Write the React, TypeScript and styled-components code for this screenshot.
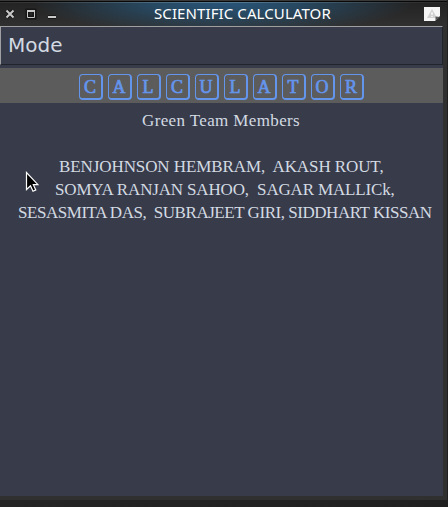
import React from "react";
import styled, { createGlobalStyle } from "styled-components";

const GlobalStyle = createGlobalStyle`
  * { box-sizing: border-box; }
  body { margin: 0; background: #1e1e1f; overflow: hidden; }
`;

const Desktop = styled.div`
  width: 448px;
  height: 507px;
  overflow: hidden;
  background: linear-gradient(90deg, #252525 0, #202020 100%);
  cursor: default;
`;

const Window = styled.div`
  position: relative;
  width: 447px;
  height: 500px;
  display: flex;
  flex-direction: column;
  background: #303030;
  border-top: 1px solid #393939;
  padding-right: 4px;
  padding-bottom: 4px;
`;

const TitleBar = styled.header`
  display: grid;
  grid-template-columns: 60px 1fr 28px;
  align-items: center;
  flex: none;
  height: 25px;
  margin-right: -4px;
  border-top: 1px solid #080808;
  background:
    linear-gradient(90deg, #ffffff10, #a0b8c060 50%, #ffffff08) top / 100% 1px no-repeat,
    radial-gradient(ellipse 190px 32px at 50% 0, #28557a 0, #28506ed0 40%, #28506e00 100%),
    linear-gradient(#232323, #303030);
`;

const Controls = styled.svg`
  display: block;
  width: 60px;
  height: 24px;
`;

const Title = styled.div`
  width: 180px;
  margin: 0 0 2px 94px;
  font: 15px/22px "Noto Sans", sans-serif;
  letter-spacing: 0.1px;
  color: #fff;
  white-space: nowrap;
`;

const StatusIcon = styled.svg`
  display: block;
  width: 16px;
  height: 14px;
  margin-left: 5px;
`;

const MenuBar = styled.nav`
  flex: none;
  height: 39px;
  padding-left: 7px;
  border: 1px solid #a0a0a3;
  border-right-color: #20242b;
  border-bottom-color: #20242b;
  background: #383c4a;
  color: #d3dae3;
  font: 20px/37px "DejaVu Sans", sans-serif;
`;

const Content = styled.main`
  flex: 1;
  padding-top: 3px;
  background: #383c4a;
`;

const Banner = styled.div`
  display: flex;
  gap: 5px;
  height: 35px;
  padding: 6px 0 0 79px;
  background: #5c5c5c;
`;

const Tile = styled.span`
  width: 24px;
  height: 26px;
  padding-right: 1px;
  border: 1px solid #6495ed;
  border-right-width: 2px;
  border-bottom-width: 2px;
  border-radius: 4px;
  color: #6495ed;
  font: 18px/24px "Liberation Serif", serif;
  -webkit-text-stroke: 0.7px #6495ed;
  display: flex;
  justify-content: center;
`;

const Line = styled.div<{ $left: number; $spacing: number; $top?: number }>`
  height: 23px;
  padding-left: ${(p) => p.$left}px;
  margin-top: ${(p) => p.$top ?? 0}px;
  color: #d3dae3;
  font: 17px/23px "Liberation Serif", serif;
  letter-spacing: ${(p) => p.$spacing}px;
  white-space: pre;
`;

const Pointer = styled.svg`
  position: absolute;
  left: 25px;
  top: 170px;
  width: 14px;
  height: 22px;
`;

export default function App() {
  return (
    <Desktop>
      <GlobalStyle />
      <Window>
        <TitleBar>
          <Controls viewBox="0 0 60 24">
            <g fill="none" stroke="#171717" strokeWidth="4">
              <path d="M6.5 8.5l7 7M13.5 8.5l-7 7M27.5 8.5h7v7h-7zM48 15h8" />
            </g>
            <g fill="none" stroke="#c9c9c9">
              <path strokeWidth="2" d="M6.5 8.5l7 7M13.5 8.5l-7 7" />
              <path d="M27.5 9v6.5h7V9" />
              <path strokeWidth="2" d="M27 9h8M48 15h8" />
            </g>
          </Controls>
          <Title>SCIENTIFIC CALCULATOR</Title>
          <StatusIcon viewBox="0 0 16 14">
            <path fill="#f5f5f5" d="M0 0h16v9l-5 5H0z" />
            <path fill="#d0d0d0" d="M8 2l5 9H3z" />
            <path stroke="#f5f5f5" strokeWidth="1.5" d="M8 5v3M8 9v1" />
            <path fill="#555" d="M11.5 13.5V9.5L16 10z" />
          </StatusIcon>
        </TitleBar>
        <MenuBar>Mode</MenuBar>
        <Content>
          <Banner>
            {"CALCULATOR".split("").map((letter, i) => (
              <Tile key={i}>{letter}</Tile>
            ))}
          </Banner>
          <Line $left={142} $spacing={0.37} $top={6}>Green Team Members</Line>
          <Line $left={59} $spacing={-0.09} $top={23}>{"BENJOHNSON HEMBRAM,  AKASH ROUT,"}</Line>
          <Line $left={55} $spacing={-0.16}>{"SOMYA RANJAN SAHOO,  SAGAR MALLICk,"}</Line>
          <Line $left={18} $spacing={-0.46}>{"SESASMITA DAS,  SUBRAJEET GIRI, SIDDHART KISSAN"}</Line>
        </Content>
        <Pointer viewBox="0 0 14 22">
          <path d="M1.5 1.5v17l4-3.8 2.5 5.5 2.8-1.3-2.5-5.2H13z" fill="#000" stroke="#fff" strokeWidth="1.2" />
        </Pointer>
      </Window>
    </Desktop>
  );
}
